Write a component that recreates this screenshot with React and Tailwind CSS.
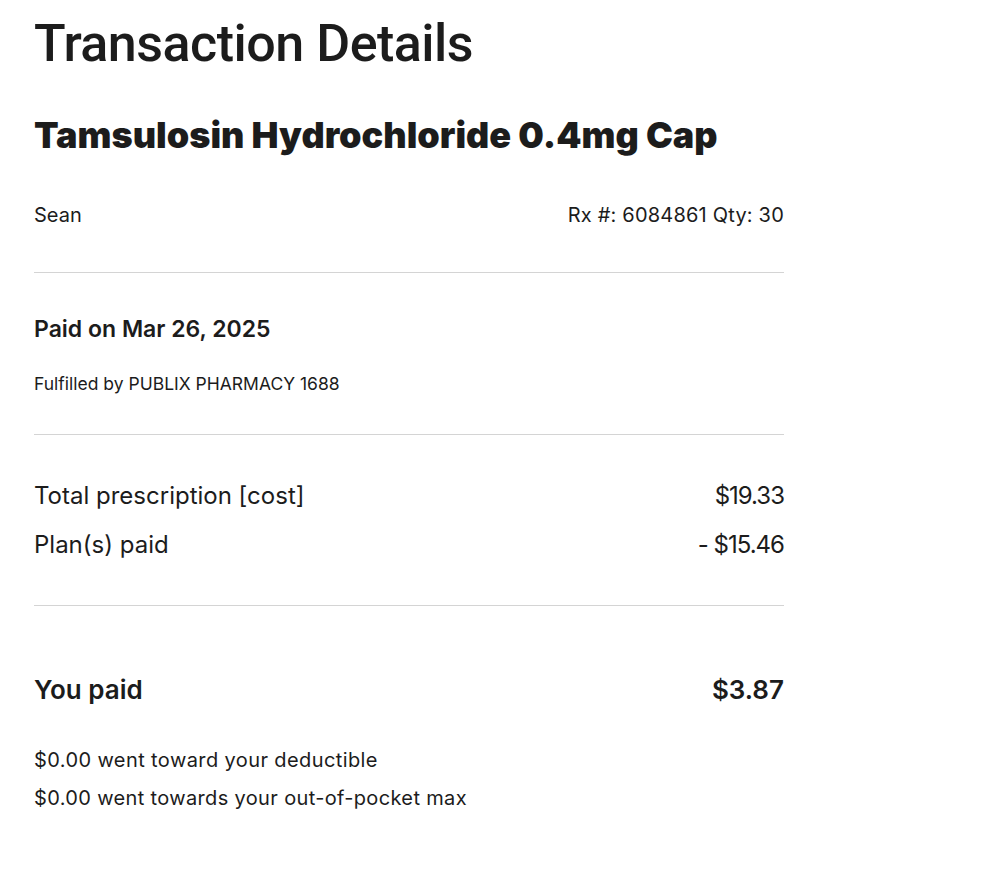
export default function App() {
  return (
    <div className="min-h-[893px] w-[1000px] bg-white text-[#1c1c1c]" style={{ fontFamily: "Inter, Roboto, 'Liberation Sans', sans-serif" }}>
      <div className="ml-[34px] w-[750px] pt-[14px]">
        <h1 className="text-[52px] leading-[60px] font-medium tracking-[-0.5px]" style={{ fontFamily: "Roboto, sans-serif" }}>Transaction Details</h1>
        <h2 className="mt-[39px] text-[36px] leading-[44px] font-black">Tamsulosin Hydrochloride 0.4mg Cap</h2>
        <div className="mt-[44px] flex justify-between text-[20px] leading-[28px]">
          <span>Sean</span>
          <span className="tracking-[0.2px]">Rx #: 6084861 Qty: 30</span>
        </div>
        <div className="mt-[43px] h-px bg-[#d4d4d4]" />
        <div className="mt-[41px] text-[23px] leading-[30px] font-semibold">Paid on Mar 26, 2025</div>
        <div className="mt-[28px] text-[17.5px] leading-[24px]">Fulfilled by PUBLIX PHARMACY 1688</div>
        <div className="mt-[38px] h-px bg-[#d4d4d4]" />
        <div className="mt-[45px] flex justify-between text-[24px] leading-[32px]">
          <span>Total prescription [cost]</span>
          <span className="tracking-[-1px]">$19.33</span>
        </div>
        <div className="mt-[17px] flex justify-between text-[24px] leading-[32px]">
          <span>Plan(s) paid</span>
          <span className="tracking-[-1px]">- $15.46</span>
        </div>
        <div className="mt-[44px] h-px bg-[#d4d4d4]" />
        <div className="mt-[67px] flex justify-between text-[26px] leading-[34px] font-semibold">
          <span>You paid</span>
          <span>$3.87</span>
        </div>
        <div className="mt-[39px] text-[20px] leading-[28px] tracking-[0.4px]">$0.00 went toward your deductible</div>
        <div className="mt-[10px] text-[20px] leading-[28px] tracking-[0.35px]">$0.00 went towards your out-of-pocket max</div>
      </div>
    </div>
  );
}
